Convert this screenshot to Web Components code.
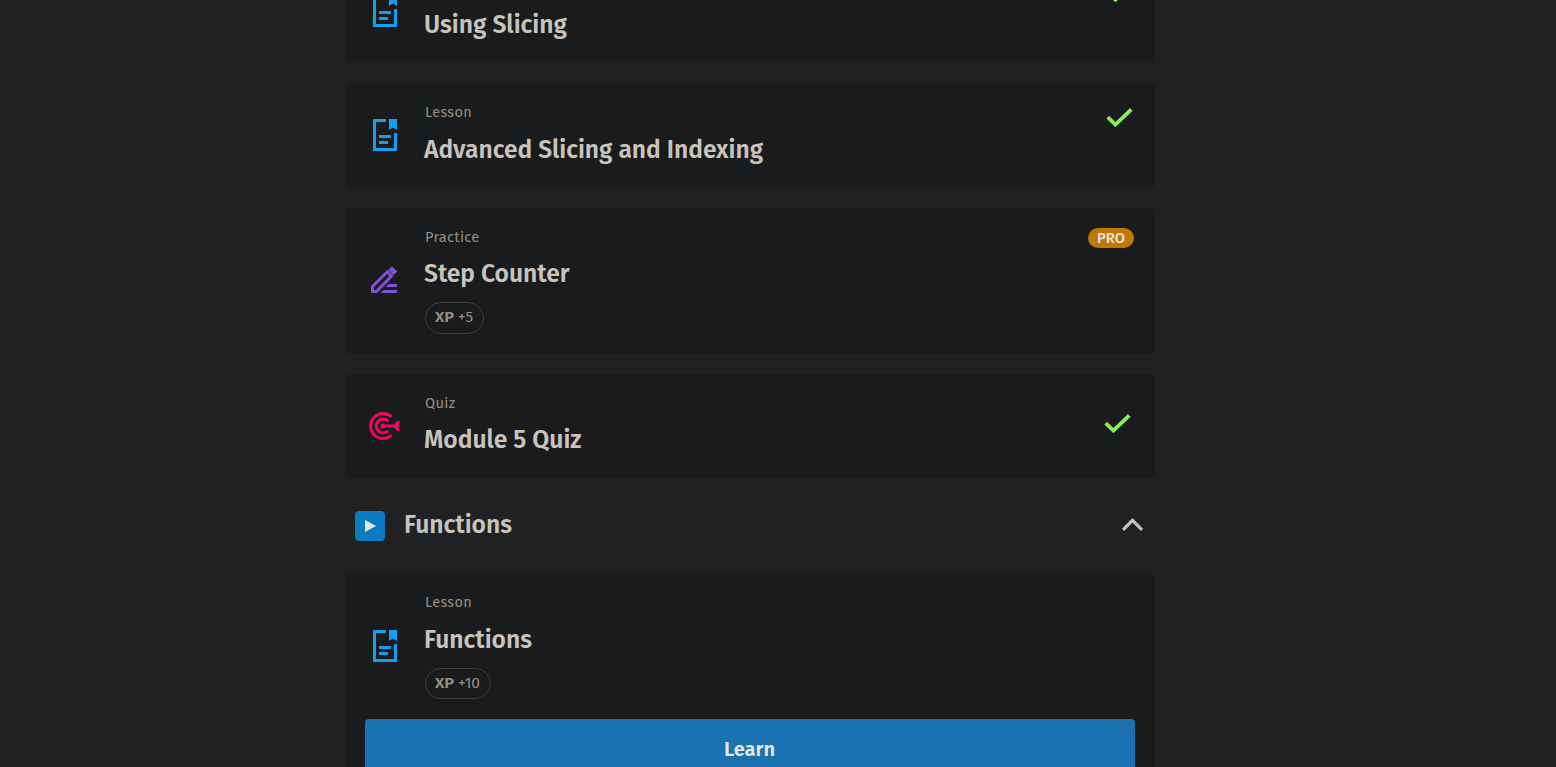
<!DOCTYPE html>
<html lang="en">
<head>
<meta charset="utf-8">
<title>Course modules</title>
<style>
body { margin: 0; height: 767px; overflow: hidden; background: #1f2122; color: #c8c3bc; font-family: "Fira Sans", "Noto Sans", "Open Sans", sans-serif; }
</style>
</head>
<body>
<course-list>
  <course-card class="first" icon="lesson" name="Using Slicing" namew="143" done></course-card>
  <course-card style="height:105px" icon="lesson" kind="Lesson" kindw="47" name="Advanced Slicing and Indexing" namew="339" done></course-card>
  <course-card style="height:146px;--shift:-1px" icon="practice" kind="Practice" kindw="54.5" name="Step Counter" namew="145.5" xp="+5" xpw="15" pro></course-card>
  <course-card style="height:104px;--shift:-1px" icon="quiz" kind="Quiz" kindw="30.5" name="Module 5 Quiz" namew="157.5" done></course-card>
  <module-header name="Functions" namew="108"></module-header>
  <course-card style="height:260px" icon="lesson" kind="Lesson" kindw="47" name="Functions" namew="108" xp="+10" xpw="22"><learn-button>Learn</learn-button></course-card>
</course-list>
<script>
// Single-line text condensed or widened to a given width.
class FitText extends HTMLElement {
  connectedCallback() {
    const w = +this.getAttribute('w');
    const root = this.attachShadow({ mode: 'open' });
    root.innerHTML = `<style>:host{display:block;width:${w}px;white-space:nowrap}
      span{display:inline-block;transform-origin:0 50%}</style><span><slot></slot></span>`;
    const span = root.querySelector('span');
    const natural = span.getBoundingClientRect().width;
    if (natural) span.style.transform = `scaleX(${w / natural})`;
  }
}
customElements.define('fit-text', FitText);

const ICONS = {
  lesson: [24, 32, '<path fill="#149ef2" d="M0 0H13V3H3V29H21V14H24V32H0ZM16 0H24V11L20 8.5L16 11ZM6 16H18V19H6ZM6 22H15V25H6Z"/>'],
  practice: [27, 27, '<path fill="none" stroke="#8150d8" stroke-width="3" d="M1.5 25.5V20.5L16.2 5.8L20.5 10.1L5.5 25.5Z"/><path fill="#8150d8" d="M17.2 3.9L20.9 .2L26.3 5.6L22.6 9.3ZM17.5 18H26V21H14.5ZM12.5 24H26V27H9.5Z"/>'],
  quiz: [32, 30, '<g fill="none" stroke="#f5055b" stroke-width="3"><path d="M22.6 4.8A12.5 12.5 0 1 0 22.6 23.2"/><path d="M19.3 9.2A7 7 0 1 0 19.3 18.8"/><path d="M14 14H27"/></g><circle cx="14" cy="14" r="2.6" fill="#f5055b"/><path fill="#f5055b" d="M23.6 14L28.4 8.8L31 9.5L29.4 13L31.6 14L29.4 15L31 18.5L28.4 19.2Z"/>'],
  check: [27, 20, '<path fill="none" stroke="#87f052" stroke-width="3.8" d="M1.7 9.2L9.4 16.7L25.3 1.4"/>'],
  play: [30, 30, '<rect width="30" height="30" rx="4" fill="#0b7bbf"/><path fill="#e8e6e3" d="M10 9L21 15L10 21Z"/>'],
  up: [22, 14, '<path fill="none" stroke="#c8c3bc" stroke-width="3.1" d="M2 11.8L11.5 2.3L21 11.8"/>']
};
class UiIcon extends HTMLElement {
  connectedCallback() {
    const [w, h, body] = ICONS[this.getAttribute('name')];
    this.attachShadow({ mode: 'open' }).innerHTML =
      `<style>:host{display:block;flex:none}svg{display:block;overflow:visible}</style><svg width="${w}" height="${h}" viewBox="0 0 ${w} ${h}">${body}</svg>`;
  }
}
customElements.define('ui-icon', UiIcon);

class XpPill extends HTMLElement {
  connectedCallback() {
    this.attachShadow({ mode: 'open' }).innerHTML = `<style>
      :host{display:flex;box-sizing:border-box;width:max-content;height:var(--pill-height,31px);padding:0 10px 0 9px;gap:4px;border:1px solid #3c4144;border-radius:16px;font-size:14px;line-height:30px;color:#988f81}
      b{font-weight:600}</style><fit-text w="19"><b>XP</b></fit-text><fit-text w="${this.getAttribute('w')}">${this.getAttribute('value')}</fit-text>`;
  }
}
customElements.define('xp-pill', XpPill);

class LearnButton extends HTMLElement {
  connectedCallback() {
    this.attachShadow({ mode: 'open' }).innerHTML = `<style>
      :host{display:flex;justify-content:center;box-sizing:border-box;height:60px;padding-right:1px;border-radius:4px;background:#1b72b1;color:#e8e6e3;font-size:20px;font-weight:600;line-height:61px}</style>
      <fit-text w="51"><slot></slot></fit-text>`;
  }
}
customElements.define('learn-button', LearnButton);

class CourseCard extends HTMLElement {
  connectedCallback() {
    const a = n => this.getAttribute(n);
    const icon = a('icon');
    const first = this.classList.contains('first');
    this.attachShadow({ mode: 'open' }).innerHTML = `<style>
      :host{display:flex;flex-direction:column;box-sizing:border-box;flex:none;border-radius:5px;background:#191b1c;padding:20px 20px 0}
      .row{display:grid;grid-template-columns:60px 1fr auto;}
      .ic{padding:${icon === 'lesson' ? (a('xp') ? '37px 0 0 8px' : first ? '17px 0 0 8px' : '16px 0 0 8px') : icon === 'practice' ? '38px 0 0 6px' : '18px 0 0 4px'}}
      .kind{font-size:14.5px;line-height:18px;height:28px;letter-spacing:.3px;margin-left:-.5px;color:#988f81}
      .name{font-size:25.6px;font-weight:600;line-height:36px;height:47px;margin:calc(1px + var(--shift,0px)) 0 0 -1px}
      xp-pill{margin-top:-1px;${icon === 'practice' ? '--pill-height:32px' : ''}}
      .end{padding:${icon === 'quiz' ? '20px 4px 0 0' : '5px 2px 0 0'}}
      .pro{width:46px;height:20px;margin:-5px -1px 0 0;border-radius:10px;background:#c27700;color:#e8e6e3;font-size:14px;line-height:21px;font-weight:500;display:flex;justify-content:center}
      ::slotted(learn-button){margin-top:20px}
      </style>
      <div class="row"><div class="ic"><ui-icon name="${icon}"></ui-icon></div>
      <div><div class="kind">${a('kind') ? `<fit-text w="${a('kindw')}">${a('kind')}</fit-text>` : ''}</div>
      <div class="name"><fit-text w="${a('namew')}">${a('name')}</fit-text></div>
      ${a('xp') ? `<xp-pill value="${a('xp')}" w="${a('xpw')}"></xp-pill>` : ''}</div>
      <div class="end">${this.hasAttribute('done') ? '<ui-icon name="check"></ui-icon>' : ''}${this.hasAttribute('pro') ? '<div class="pro"><fit-text w="28">PRO</fit-text></div>' : ''}</div></div>
      <slot></slot>`;
  }
}
customElements.define('course-card', CourseCard);

class ModuleHeader extends HTMLElement {
  connectedCallback() {
    this.attachShadow({ mode: 'open' }).innerHTML = `<style>
      :host{display:flex;align-items:center;box-sizing:border-box;flex:none;height:55px;padding:0 12px 0 10px;gap:20px}
      .t{flex:1;font-size:25.6px;font-weight:600;line-height:36px;margin:-2px 0 0 -1px}
      .up{margin-top:-2px}
      </style><ui-icon name="play"></ui-icon><div class="t"><fit-text w="${this.getAttribute('namew')}">${this.getAttribute('name')}</fit-text></div><ui-icon class="up" name="up"></ui-icon>`;
  }
}
customElements.define('module-header', ModuleHeader);

class CourseList extends HTMLElement {
  connectedCallback() {
    this.attachShadow({ mode: 'open' }).innerHTML = `<style>
      :host{display:flex;flex-direction:column;gap:20px;width:810px;margin-left:345px;height:767px;overflow:hidden}
      ::slotted(.first){height:105px;margin-top:-42px}
      </style><slot></slot>`;
  }
}
customElements.define('course-list', CourseList);
</script>
</body>
</html>
